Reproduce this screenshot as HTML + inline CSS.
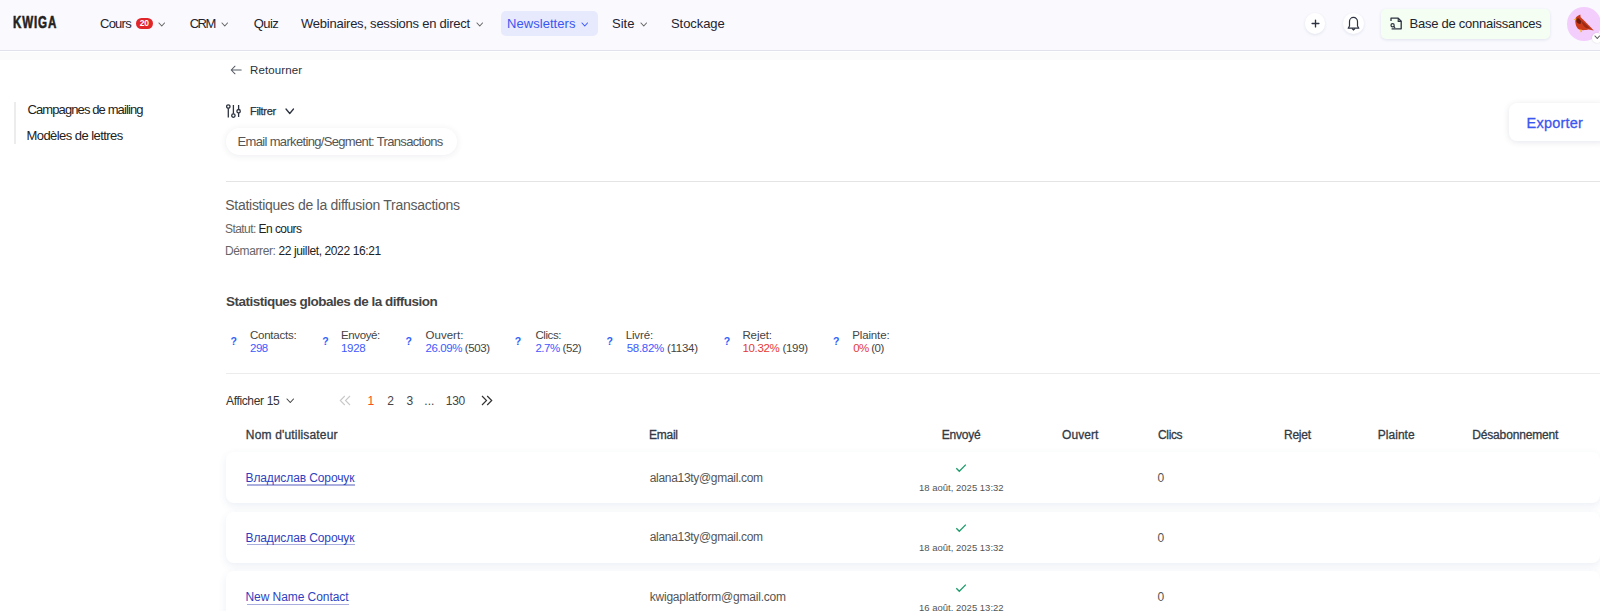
<!DOCTYPE html>
<html><head><meta charset="utf-8"><style>
html,body{margin:0;padding:0;}
body{width:1600px;height:611px;overflow:hidden;position:relative;background:#fff;font-family:'Liberation Sans', sans-serif;}
.a{position:absolute;}
.t{position:absolute;white-space:nowrap;line-height:20px;font-family:'Liberation Sans', sans-serif;}
</style></head><body>
<div class="a" style="left:0;top:0;width:1600px;height:50px;background:#f9f9fe"></div>
<div class="a" style="left:0;top:50px;width:1600px;height:1px;background:#e1e1ec"></div>
<div class="a" style="left:0;top:52px;width:1600px;height:8px;background:#fbfbfb"></div>
<div class="t" style="left:13.2px;top:13.4px;font-size:17px;font-weight:700;color:#222;transform:scaleX(0.68);transform-origin:0 0;letter-spacing:1.3px;-webkit-text-stroke:0.6px #222">KWIGA</div>
<div class="a" style="left:136px;top:18px;width:16.5px;height:11px;border-radius:6px;background:#e0262b;color:#fff;font-family:'Liberation Sans', sans-serif;font-size:8.5px;font-weight:700;line-height:11px;text-align:center;letter-spacing:-0.2px">20</div>
<div class="a" style="left:501px;top:10.5px;width:96.5px;height:25.5px;border-radius:5px;background:#e7e9fd"></div>
<svg class="a" style="left:157.75px;top:21.8px" width="7.5" height="5" viewBox="-1 -1 7.5 5"><polyline points="0,0 2.75,3 5.5,0" fill="none" stroke="#666" stroke-width="1.05" stroke-linecap="round" stroke-linejoin="round"/></svg>
<svg class="a" style="left:221.25px;top:21.8px" width="7.5" height="5" viewBox="-1 -1 7.5 5"><polyline points="0,0 2.75,3 5.5,0" fill="none" stroke="#666" stroke-width="1.05" stroke-linecap="round" stroke-linejoin="round"/></svg>
<svg class="a" style="left:476.05px;top:21.8px" width="7.5" height="5" viewBox="-1 -1 7.5 5"><polyline points="0,0 2.75,3 5.5,0" fill="none" stroke="#666" stroke-width="1.05" stroke-linecap="round" stroke-linejoin="round"/></svg>
<svg class="a" style="left:639.75px;top:21.8px" width="7.5" height="5" viewBox="-1 -1 7.5 5"><polyline points="0,0 2.75,3 5.5,0" fill="none" stroke="#666" stroke-width="1.05" stroke-linecap="round" stroke-linejoin="round"/></svg>
<svg class="a" style="left:581.05px;top:21.8px" width="7.5" height="5" viewBox="-1 -1 7.5 5"><polyline points="0,0 2.75,3 5.5,0" fill="none" stroke="#3d5afe" stroke-width="1.05" stroke-linecap="round" stroke-linejoin="round"/></svg>
<div class="a" style="left:1304.7px;top:13.3px;width:20.6px;height:20.6px;border-radius:50%;background:#fff;box-shadow:0 1px 3px rgba(60,70,120,0.12)"></div>
<div class="a" style="left:1343.0px;top:13.3px;width:20.6px;height:20.6px;border-radius:50%;background:#fff;box-shadow:0 1px 3px rgba(60,70,120,0.12)"></div>
<svg class="a" style="left:1310.2px;top:18px" width="11" height="11" viewBox="0 0 11 11"><path d="M5.5 2.1V8.9M2.1 5.5H8.9" stroke="#2d3340" stroke-width="1.35" stroke-linecap="round"/></svg>
<svg class="a" style="left:1346.3px;top:15px" width="15" height="16" viewBox="0 0 15 16"><path d="M2.2 13.2h10.6l-1.3-2.2V6.4a4 4 0 0 0-8 0V11z" fill="none" stroke="#2d3340" stroke-width="1.2" stroke-linejoin="round"/><path d="M6 13.5l1.5 1.4 1.5-1.4" fill="none" stroke="#2d3340" stroke-width="1.1"/></svg>
<div class="a" style="left:1381px;top:8.6px;width:168.8px;height:30px;border-radius:5px;background:#f5fef2;box-shadow:0 1px 3px rgba(60,70,120,0.12)"></div>
<svg class="a" style="left:1389px;top:16px" width="14" height="15" viewBox="0 0 14 15"><path d="M2 5V2.2h7.2l3 3V12.8H2.6" fill="none" stroke="#2d3340" stroke-width="1.3" stroke-linejoin="round"/><path d="M9.2 2.2V5.4h3" fill="none" stroke="#2d3340" stroke-width="1.1"/><circle cx="3.6" cy="9.3" r="1.6" fill="none" stroke="#2d3340" stroke-width="1.2"/><path d="M4.8 10.5l1.3 1.3" stroke="#2d3340" stroke-width="1.2"/></svg>
<div class="a" style="left:1567px;top:7px;width:33.5px;height:33.5px;border-radius:50%;background:#f3cefc"></div>
<svg class="a" style="left:1570px;top:12px" width="26" height="22" viewBox="1570 12 26 22"><path d="M1575.3 19.5 C1575.5 17 1577.5 15.8 1580.3 14.6 L1580.6 17.2 C1583 19 1586 22.5 1589 25.5 L1593.8 30.6 L1588.5 29.6 C1586.5 30 1582.5 30.6 1580 29.8 C1576.5 28.8 1575 24 1575.3 19.5Z" fill="#cd3a1a"/><path d="M1575.6 19 L1578.8 18.2 L1581.2 21 L1580.5 24 C1578 24 1576 22 1575.6 19Z" fill="#6e1a0e"/><path d="M1581 20.5 C1584 22.5 1587.5 25.5 1590.5 28.8 L1586 28 C1583.5 26 1582 23.5 1581 20.5Z" fill="#9a2a14"/><path d="M1573.6 19.2 L1576.4 18.4 L1576.2 20.8Z" fill="#f6b400"/><path d="M1580.2 29.4 L1580.6 32.2 L1582 32 L1581.6 29.6Z" fill="#f6b400"/></svg>
<div class="a" style="left:1592px;top:32.5px;width:10px;height:10px;border-radius:50%;background:#fff;box-shadow:0 0 2px rgba(0,0,0,0.15)"></div>
<svg class="a" style="left:1593.5px;top:35.2px" width="6.5" height="4.5" viewBox="-1 -1 6.5 4.5"><polyline points="0,0 2.25,2.5 4.5,0" fill="none" stroke="#555" stroke-width="1.1" stroke-linecap="round" stroke-linejoin="round"/></svg>
<div class="a" style="left:14px;top:102px;width:2px;height:42px;background:#ececec"></div>
<svg class="a" style="left:229px;top:64px" width="14" height="12" viewBox="0 0 14 12"><path d="M12.2 6H2.3M6 2.2L2.2 6 6 9.8" fill="none" stroke="#555a63" stroke-width="1.05" stroke-linecap="round" stroke-linejoin="round"/></svg>
<svg class="a" style="left:224px;top:103px" width="18" height="17" viewBox="0 0 18 17"><g fill="none" stroke="#2d3340" stroke-width="1.3"><path d="M4.3 5.3V14.4"/><circle cx="4.3" cy="3.5" r="1.7"/><path d="M9.4 2V10.8"/><circle cx="9.4" cy="12.6" r="1.7"/><path d="M14.6 2V6.4M14.6 9.9V14"/><circle cx="14.6" cy="8.2" r="1.7"/></g></svg>
<svg class="a" style="left:285px;top:108px" width="9.5" height="6.5" viewBox="-1 -1 9.5 6.5"><polyline points="0,0 3.75,4.5 7.5,0" fill="none" stroke="#2d3340" stroke-width="1.3" stroke-linecap="round" stroke-linejoin="round"/></svg>
<div class="a" style="left:226.4px;top:127.8px;width:231px;height:27.2px;border-radius:14px;background:#fff;box-shadow:0 1px 7px rgba(40,50,90,0.09)"></div>
<div class="a" style="left:226px;top:181px;width:1374px;height:1px;background:#e4e4e4"></div>
<div class="a" style="left:226px;top:372.5px;width:1374px;height:1.5px;background:#ececec"></div>
<div class="a" style="left:1509px;top:103px;width:100px;height:38px;border-radius:8px;background:#fff;box-shadow:0 1px 6px rgba(40,50,90,0.12)"></div>
<div class="t" style="left:230.5px;top:331.0px;font-size:10.5px;font-weight:700;color:#2f62fb">?</div>
<div class="t" style="left:322.25px;top:331.0px;font-size:10.5px;font-weight:700;color:#2f62fb">?</div>
<div class="t" style="left:405.5px;top:331.0px;font-size:10.5px;font-weight:700;color:#2f62fb">?</div>
<div class="t" style="left:514.8px;top:331.0px;font-size:10.5px;font-weight:700;color:#2f62fb">?</div>
<div class="t" style="left:606.5px;top:331.0px;font-size:10.5px;font-weight:700;color:#2f62fb">?</div>
<div class="t" style="left:723.7px;top:331.0px;font-size:10.5px;font-weight:700;color:#2f62fb">?</div>
<div class="t" style="left:833.1px;top:331.0px;font-size:10.5px;font-weight:700;color:#2f62fb">?</div>
<svg class="a" style="left:286.4px;top:398.3px" width="8.5" height="5.5" viewBox="-1 -1 8.5 5.5"><polyline points="0,0 3.25,3.5 6.5,0" fill="none" stroke="#444" stroke-width="1.1" stroke-linecap="round" stroke-linejoin="round"/></svg>
<svg class="a" style="left:339px;top:395px" width="13" height="11" viewBox="0 0 13 11"><path d="M5.8 1L1.3 5.5 5.8 10M11 1L6.5 5.5 11 10" fill="none" stroke="#c9c9c9" stroke-width="1.1"/></svg>
<svg class="a" style="left:481px;top:395px" width="13" height="11" viewBox="0 0 13 11"><path d="M1 1L5.5 5.5 1 10M6.2 1L10.7 5.5 6.2 10" fill="none" stroke="#333" stroke-width="1.2"/></svg>
<div class="a" style="left:226px;top:451.6px;width:1374px;height:51.3px;border-radius:8px;background:#fff;box-shadow:0 3px 9px 0 rgba(30,80,140,0.09)"></div>
<div class="a" style="left:226px;top:511.7px;width:1374px;height:51.3px;border-radius:8px;background:#fff;box-shadow:0 3px 9px 0 rgba(30,80,140,0.09)"></div>
<div class="a" style="left:226px;top:571.3px;width:1374px;height:51.3px;border-radius:8px;background:#fff;box-shadow:0 3px 9px 0 rgba(30,80,140,0.09)"></div>
<svg class="a" style="left:955px;top:463px" width="12" height="10" viewBox="0 0 12 10"><path d="M1.3 5.2L4.3 8.3 10.8 1.6" fill="none" stroke="#1e9c6c" stroke-width="1.3"/></svg>
<div class="a" style="left:246.5px;top:484.2px;width:108.3px;height:1.4px;background:#a9aede"></div>
<svg class="a" style="left:955px;top:522.9px" width="12" height="10" viewBox="0 0 12 10"><path d="M1.3 5.2L4.3 8.3 10.8 1.6" fill="none" stroke="#1e9c6c" stroke-width="1.3"/></svg>
<div class="a" style="left:246.5px;top:544.0999999999999px;width:108.3px;height:1.4px;background:#a9aede"></div>
<svg class="a" style="left:955px;top:582.5px" width="12" height="10" viewBox="0 0 12 10"><path d="M1.3 5.2L4.3 8.3 10.8 1.6" fill="none" stroke="#1e9c6c" stroke-width="1.3"/></svg>
<div class="a" style="left:246.5px;top:603.7px;width:102px;height:1.4px;background:#a9aede"></div>
<div class="t" style="left:100.00px;top:13.50px;font-size:13px;font-weight:400;color:#1f2430;letter-spacing:-0.750px;">Cours</div>
<div class="t" style="left:189.75px;top:13.50px;font-size:13px;font-weight:400;color:#1f2430;letter-spacing:-1.550px;">CRM</div>
<div class="t" style="left:253.75px;top:13.50px;font-size:13px;font-weight:400;color:#1f2430;letter-spacing:-0.583px;">Quiz</div>
<div class="t" style="left:301.00px;top:13.50px;font-size:13px;font-weight:400;color:#1f2430;letter-spacing:-0.241px;">Webinaires, sessions en direct</div>
<div class="t" style="left:507.00px;top:13.50px;font-size:13px;font-weight:400;color:#3a56f2;letter-spacing:0.050px;">Newsletters</div>
<div class="t" style="left:612.00px;top:13.50px;font-size:13px;font-weight:400;color:#1f2430;letter-spacing:0.000px;">Site</div>
<div class="t" style="left:671.00px;top:13.50px;font-size:13px;font-weight:400;color:#1f2430;letter-spacing:-0.071px;">Stockage</div>
<div class="t" style="left:1409.50px;top:13.70px;font-size:13px;font-weight:400;color:#1f2430;letter-spacing:-0.250px;">Base de connaissances</div>
<div class="t" style="left:250.00px;top:60.00px;font-size:11.5px;font-weight:400;color:#2a2f3a;letter-spacing:0.125px;">Retourner</div>
<div class="t" style="left:250.00px;top:100.60px;font-size:11px;font-weight:400;color:#2a2f3a;letter-spacing:-0.333px;-webkit-text-stroke:0.25px #2a2f3a;">Filtrer</div>
<div class="t" style="left:27.50px;top:100.40px;font-size:13px;font-weight:400;color:#222;letter-spacing:-0.895px;">Campagnes de mailing</div>
<div class="t" style="left:26.50px;top:125.75px;font-size:13px;font-weight:400;color:#222;letter-spacing:-0.559px;">Modèles de lettres</div>
<div class="t" style="left:237.60px;top:132.00px;font-size:13px;font-weight:400;color:#555;letter-spacing:-0.667px;">Email marketing/Segment: Transactions</div>
<div class="t" style="left:1526.60px;top:112.50px;font-size:14.5px;font-weight:400;color:#3b57f0;letter-spacing:0.200px;-webkit-text-stroke:0.3px #3b57f0;">Exporter</div>
<div class="t" style="left:225.25px;top:195.30px;font-size:14px;font-weight:400;color:#5a5a5a;letter-spacing:-0.275px;">Statistiques de la diffusion Transactions</div>
<div class="t" style="left:225.00px;top:218.50px;font-size:12px;font-weight:400;color:#666;letter-spacing:-0.560px;">Statut: <span style="color:#222">En cours</span></div>
<div class="t" style="left:225.00px;top:240.80px;font-size:12px;font-weight:400;color:#666;letter-spacing:-0.387px;">Démarrer: <span style="color:#222">22 juillet, 2022 16:21</span></div>
<div class="t" style="left:226.00px;top:292.00px;font-size:13.5px;font-weight:700;color:#444;letter-spacing:-0.514px;">Statistiques globales de la diffusion</div>
<div class="t" style="left:250.00px;top:324.75px;font-size:11.5px;font-weight:400;color:#444;letter-spacing:-0.250px;">Contacts:</div>
<div class="t" style="left:250.00px;top:338.00px;font-size:11.5px;font-weight:400;color:#3d5afe;letter-spacing:-0.500px;">298</div>
<div class="t" style="left:341.00px;top:324.75px;font-size:11.5px;font-weight:400;color:#444;letter-spacing:-0.375px;">Envoyé:</div>
<div class="t" style="left:341.00px;top:338.00px;font-size:11.5px;font-weight:400;color:#3d5afe;letter-spacing:-0.333px;">1928</div>
<div class="t" style="left:425.50px;top:324.75px;font-size:11.5px;font-weight:400;color:#444;letter-spacing:0.033px;">Ouvert:</div>
<div class="t" style="left:425.50px;top:338.00px;font-size:11.5px;font-weight:400;color:#3d5afe;letter-spacing:-0.409px;">26.09% <span style="color:#444">(503)</span></div>
<div class="t" style="left:535.40px;top:324.75px;font-size:11.5px;font-weight:400;color:#444;letter-spacing:-0.400px;">Clics:</div>
<div class="t" style="left:535.40px;top:338.00px;font-size:11.5px;font-weight:400;color:#3d5afe;letter-spacing:-0.450px;">2.7% <span style="color:#444">(52)</span></div>
<div class="t" style="left:625.70px;top:324.75px;font-size:11.5px;font-weight:400;color:#444;letter-spacing:-0.140px;">Livré:</div>
<div class="t" style="left:626.70px;top:338.00px;font-size:11.5px;font-weight:400;color:#3d5afe;letter-spacing:-0.275px;">58.82% <span style="color:#444">(1134)</span></div>
<div class="t" style="left:742.40px;top:324.75px;font-size:11.5px;font-weight:400;color:#444;letter-spacing:-0.080px;">Rejet:</div>
<div class="t" style="left:742.40px;top:338.00px;font-size:11.5px;font-weight:400;color:#e53935;letter-spacing:-0.309px;">10.32% <span style="color:#444">(199)</span></div>
<div class="t" style="left:852.20px;top:324.75px;font-size:11.5px;font-weight:400;color:#444;letter-spacing:-0.129px;">Plainte:</div>
<div class="t" style="left:853.20px;top:338.00px;font-size:11.5px;font-weight:400;color:#e53935;letter-spacing:-0.560px;">0% <span style="color:#444">(0)</span></div>
<div class="t" style="left:226.00px;top:390.60px;font-size:12px;font-weight:400;color:#333;letter-spacing:-0.350px;">Afficher 15</div>
<div class="t" style="left:367.50px;top:390.60px;font-size:12px;font-weight:400;color:#f4511e;letter-spacing:-0.700px;">1</div>
<div class="t" style="left:387.20px;top:390.60px;font-size:12px;font-weight:400;color:#444;letter-spacing:0.200px;">2</div>
<div class="t" style="left:406.50px;top:390.60px;font-size:12px;font-weight:400;color:#444;letter-spacing:-1.200px;">3</div>
<div class="t" style="left:424.30px;top:390.60px;font-size:12px;font-weight:400;color:#444;letter-spacing:0.000px;">...</div>
<div class="t" style="left:445.80px;top:390.60px;font-size:12px;font-weight:400;color:#444;letter-spacing:-0.300px;">130</div>
<div class="t" style="left:245.80px;top:425.10px;font-size:12px;font-weight:400;color:#333a44;letter-spacing:0.169px;-webkit-text-stroke:0.3px #333a44;">Nom d'utilisateur</div>
<div class="t" style="left:649.00px;top:425.10px;font-size:12px;font-weight:400;color:#333a44;letter-spacing:-0.250px;-webkit-text-stroke:0.3px #333a44;">Email</div>
<div class="t" style="left:941.80px;top:425.10px;font-size:12px;font-weight:400;color:#333a44;letter-spacing:-0.240px;-webkit-text-stroke:0.3px #333a44;">Envoyé</div>
<div class="t" style="left:1062.00px;top:425.10px;font-size:12px;font-weight:400;color:#333a44;letter-spacing:0.080px;-webkit-text-stroke:0.3px #333a44;">Ouvert</div>
<div class="t" style="left:1158.00px;top:425.10px;font-size:12px;font-weight:400;color:#333a44;letter-spacing:-0.350px;-webkit-text-stroke:0.3px #333a44;">Clics</div>
<div class="t" style="left:1284.00px;top:425.10px;font-size:12px;font-weight:400;color:#333a44;letter-spacing:-0.250px;-webkit-text-stroke:0.3px #333a44;">Rejet</div>
<div class="t" style="left:1377.70px;top:425.10px;font-size:12px;font-weight:400;color:#333a44;letter-spacing:0.050px;-webkit-text-stroke:0.3px #333a44;">Plainte</div>
<div class="t" style="left:1472.20px;top:425.10px;font-size:12px;font-weight:400;color:#333a44;letter-spacing:-0.150px;-webkit-text-stroke:0.3px #333a44;">Désabonnement</div>
<div class="t" style="left:245.50px;top:467.60px;font-size:12px;font-weight:400;color:#2f3fc0;letter-spacing:-0.106px;">Владислав Сорочук</div>
<div class="t" style="left:649.70px;top:467.50px;font-size:12px;font-weight:400;color:#555;letter-spacing:-0.306px;">alana13ty@gmail.com</div>
<div class="t" style="left:919.00px;top:478.00px;font-size:9.5px;font-weight:400;color:#555;letter-spacing:0.006px;">18 août, 2025 13:32</div>
<div class="t" style="left:1157.50px;top:467.90px;font-size:12px;font-weight:400;color:#555;letter-spacing:-0.300px;">0</div>
<div class="t" style="left:245.50px;top:527.50px;font-size:12px;font-weight:400;color:#2f3fc0;letter-spacing:-0.106px;">Владислав Сорочук</div>
<div class="t" style="left:649.70px;top:527.40px;font-size:12px;font-weight:400;color:#555;letter-spacing:-0.306px;">alana13ty@gmail.com</div>
<div class="t" style="left:919.00px;top:537.90px;font-size:9.5px;font-weight:400;color:#555;letter-spacing:0.006px;">18 août, 2025 13:32</div>
<div class="t" style="left:1157.50px;top:527.80px;font-size:12px;font-weight:400;color:#555;letter-spacing:-0.300px;">0</div>
<div class="t" style="left:245.50px;top:587.10px;font-size:12px;font-weight:400;color:#2f3fc0;letter-spacing:-0.067px;">New Name Contact</div>
<div class="t" style="left:649.70px;top:587.00px;font-size:12px;font-weight:400;color:#555;letter-spacing:-0.205px;">kwigaplatform@gmail.com</div>
<div class="t" style="left:919.00px;top:597.50px;font-size:9.5px;font-weight:400;color:#555;letter-spacing:0.006px;">16 août, 2025 13:22</div>
<div class="t" style="left:1157.50px;top:587.40px;font-size:12px;font-weight:400;color:#555;letter-spacing:-0.300px;">0</div>
</body></html>
